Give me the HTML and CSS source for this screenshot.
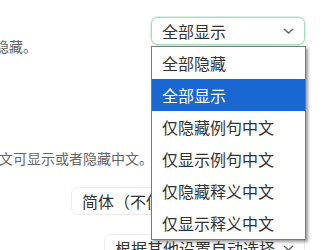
FILE: index.html
```html
<!DOCTYPE html>
<html lang="zh-CN">
<head>
  <meta charset="UTF-8">
  <meta name="viewport" content="width=device-width, initial-scale=1.0">
  <title>设置 - 中文显示</title>
  <link rel="stylesheet" href="styles.css">
</head>
<body>
  <div class="page">
    <div class="row row-mode">
      <p class="desc desc-mode">点击例句或释义中的中文可切换显示或隐藏。</p>
      <div class="select select-focus select-mode">
        <span>全部显示</span>
        <svg class="chevron" width="11" height="6" viewBox="0 0 11 6"><polyline points="1,1 5.5,5 10,1" /></svg>
      </div>
    </div>

    <p class="desc desc-lang">在单词本中点击例句或释义中文可显示或者隐藏中文。</p>

    <div class="row">
      <div class="select select-lang">
        <span>简体（不使用繁体转换）</span>
        <svg class="chevron" width="11" height="6" viewBox="0 0 11 6"><polyline points="1,1 5.5,5 10,1" /></svg>
      </div>
    </div>

    <div class="row">
      <div class="select select-auto">
        <span>根据其他设置自动选择</span>
        <svg class="chevron" width="11" height="6" viewBox="0 0 11 6"><polyline points="1,1 5.5,5 10,1" /></svg>
      </div>
    </div>

    <!-- 打开的下拉列表 -->
    <ul class="dropdown">
      <li>全部隐藏</li>
      <li class="selected">全部显示</li>
      <li>仅隐藏例句中文</li>
      <li>仅显示例句中文</li>
      <li>仅隐藏释义中文</li>
      <li>仅显示释义中文</li>
    </ul>
  </div>
</body>
</html>
```

FILE: styles.css
```css
body {
  margin: 0;
  padding: 0;
  background: #fff;
  font-family: "Noto Sans CJK SC", "Noto Sans", sans-serif;
  overflow: hidden;
}
.page {
  position: relative;
  width: 305px;
  padding-top: 17px;
}
.row {
  display: flex;
  justify-content: flex-end;
  margin-top: 19px;
}
.row-mode {
  justify-content: space-between;
  align-items: flex-start;
  margin-top: 0;
}
.desc {
  display: flex;
  justify-content: flex-end;
  white-space: nowrap;
  margin: 0;
  font-size: 14px;
  line-height: 20px;
  color: #666;
}
.desc-mode {
  width: 37px;
  margin-top: 19px;
}
.desc-lang {
  width: 153px;
  margin-top: 92px;
}
.select {
  box-sizing: border-box;
  display: flex;
  align-items: center;
  justify-content: space-between;
  height: 28px;
  padding: 0 10px;
  border: 1px solid #ececec;
  border-radius: 7px;
  background: #fff;
  font-size: 16px;
  color: #333;
  white-space: nowrap;
}
.select-focus {
  border-color: #a3dfbc;
  box-shadow: 0 0 0 1px rgba(163, 223, 188, 0.45);
}
.select-mode { width: 154px; }
.select-lang { width: 234px; }
.select-auto { width: 201px; }
.chevron polyline {
  fill: none;
  stroke: #666;
  stroke-width: 1.5;
}
.dropdown {
  position: absolute;
  left: 151px;
  top: 46px;
  width: 153px;
  margin: 0;
  padding: 0;
  list-style: none;
  background: #fff;
  border: 1px solid #7a7a7a;
  box-shadow: 2px 2px 3px rgba(0, 0, 0, 0.4);
}
.dropdown li {
  height: 32px;
  line-height: 32px;
  padding-left: 10px;
  font-size: 16px;
  color: #333;
}
.dropdown li.selected {
  background: #1967d2;
  color: #fff;
}
```
